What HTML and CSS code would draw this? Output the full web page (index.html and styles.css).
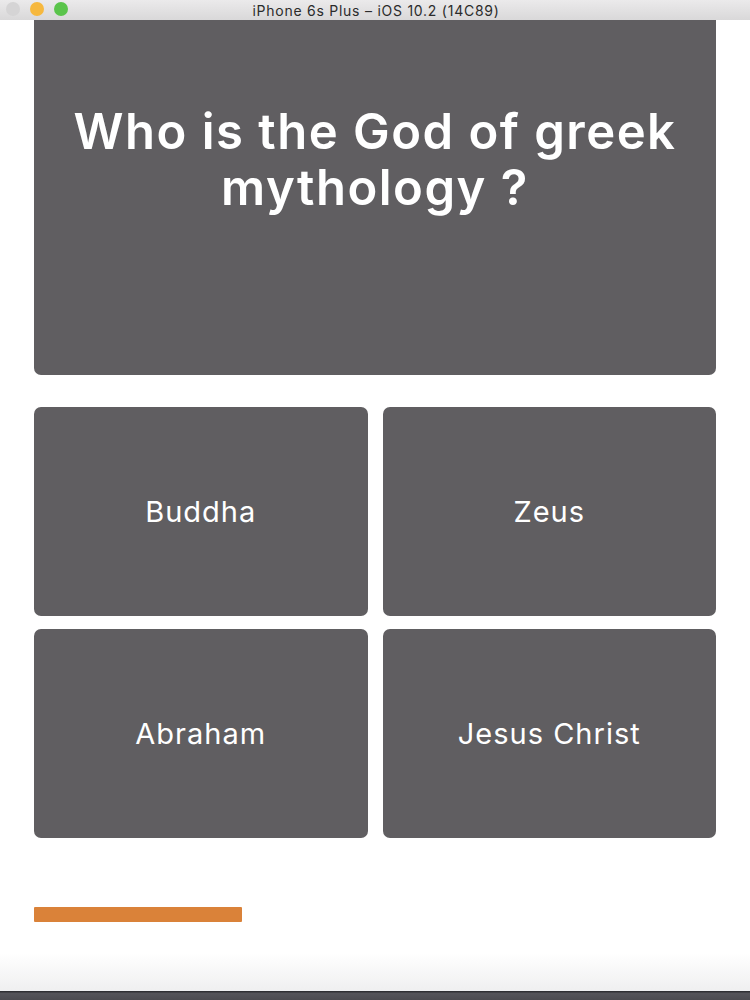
FILE: index.html
```html
<!DOCTYPE html>
<html lang="en">
<head>
<meta charset="utf-8">
<title>Quiz</title>
<link rel="stylesheet" href="styles.css">
</head>
<body>
<div class="window">
  <header class="titlebar">
    <div class="lights">
      <span class="light light-close"></span>
      <span class="light light-min"></span>
      <span class="light light-max"></span>
    </div>
    <div class="title">iPhone 6s Plus – iOS 10.2 (14C89)</div>
  </header>
  <main class="screen">
    <section class="question">
      <h1 class="question-text">Who is the God of greek mythology ?</h1>
    </section>
    <section class="answers">
      <button class="answer">Buddha</button>
      <button class="answer">Zeus</button>
      <button class="answer">Abraham</button>
      <button class="answer">Jesus Christ</button>
    </section>
    <div class="progress"></div>
    <div class="fade"></div>
  </main>
  <footer class="dock"></footer>
</div>
</body>
</html>
```

FILE: styles.css
```css
html, body {
  margin: 0;
  padding: 0;
  background: #ffffff;
}

.window {
  width: 750px;
  height: 1000px;
  display: flex;
  flex-direction: column;
  overflow: hidden;
}

.titlebar {
  height: 20px;
  flex: 0 0 20px;
  background: linear-gradient(#ebeaeb, #d9d8d9);
  display: flex;
  align-items: center;
  justify-content: center;
  position: relative;
  font-family: Inter, "Liberation Sans", Arial, sans-serif;
  font-size: 14px;
  letter-spacing: 0.75px;
  color: #2b2b2b;
}

.lights {
  position: absolute;
  left: 6px;
  top: 2px;
  display: flex;
  gap: 10px;
}

.light {
  width: 14px;
  height: 14px;
  border-radius: 50%;
  display: block;
}

.light-close { background: #d5d4d5; }
.light-min { background: #f6b83e; }
.light-max { background: #5ac44b; }

.title {
  padding-left: 2px;
}

.screen {
  flex: 1;
  display: flex;
  flex-direction: column;
  padding: 0 34px;
  font-family: Inter, "Liberation Sans", Arial, sans-serif;
  color: #ffffff;
}

.question {
  height: 355px;
  flex: 0 0 355px;
  background: #605e61;
  border-radius: 0 0 7px 7px;
  box-sizing: border-box;
  padding: 84px 4px 0;
}

.question-text {
  margin: 0;
  text-align: center;
  font-size: 49px;
  line-height: 56px;
  font-weight: 600;
  letter-spacing: 1.5px;
  color: #ffffff;
}

.answers {
  margin-top: 32px;
  display: grid;
  grid-template-columns: 1fr 1fr;
  grid-template-rows: 209px 209px;
  column-gap: 15px;
  row-gap: 13px;
}

.answer {
  border: none;
  background: #605e61;
  border-radius: 7px;
  color: #ffffff;
  font-family: Inter, "Liberation Sans", Arial, sans-serif;
  font-size: 29px;
  letter-spacing: 1px;
  padding: 0;
}

.progress {
  margin-top: 69px;
  width: 208px;
  height: 15px;
  background: #da8239;
  border-radius: 1px;
}

.fade {
  flex: 1;
  margin: 0 -34px;
  background: linear-gradient(#ffffff 0%, #ffffff 45%, #efeff0 100%);
}

.dock {
  height: 9px;
  flex: 0 0 9px;
  background: linear-gradient(#2f2f33 0, #2f2f33 1px, #55545a 2px, #4c4b50 100%);
}
```
